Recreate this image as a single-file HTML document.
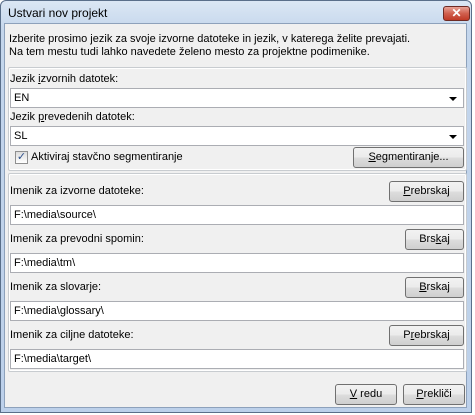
<!DOCTYPE html>
<html><head><style>
*{margin:0;padding:0;box-sizing:border-box}
body{width:475px;height:415px;background:#fff;font-family:"Liberation Sans",sans-serif;font-size:11px;color:#000;position:relative;overflow:hidden}
.win{position:absolute;left:0;top:0;width:472px;height:413px;background:linear-gradient(#dbe7f4,#c4d6ec 30px,#bcd0ea);border:1px solid #5a6f8a;border-radius:6px 6px 0 0}
.client{position:absolute;left:4px;top:23px;width:463px;height:385px;background:#f0f0f0;border:1px solid #8da1bb}
.a{position:absolute;white-space:nowrap}
.grp{position:absolute;border:1px solid #c8ccd0;border-radius:2px;box-shadow:inset 0 0 0 1px #fff}
.inp{position:absolute;background:#fff;border:1px solid #abadb3;height:20px;padding:3px 0 0 3px;font-size:11px}
.btn{position:absolute;border:1px solid #707070;border-radius:3px;background:linear-gradient(#f2f2f2 0,#ebebeb 50%,#dddddd 51%,#cfcfcf);text-align:center;line-height:18px;font-size:11px}
.arr{position:absolute;right:6px;top:8px;width:0;height:0;border-left:4px solid transparent;border-right:4px solid transparent;border-top:4px solid #000}
u{text-decoration:underline}
</style></head><body>
<div class="win">
 <div class="a" style="left:7px;top:5px;font-size:12px">Ustvari nov projekt</div>
 <div style="position:absolute;left:442px;top:5px;width:27px;height:15px;border:1px solid #6d2b24;border-radius:3px;background:linear-gradient(#e8a296,#d0604e 50%,#c03a26);color:#fff;text-align:center;font-weight:bold;font-size:12px;line-height:13px">✕</div>
</div>
<div class="client"></div>
<div class="a" style="left:9px;top:33px">Izberite prosimo jezik za svoje izvorne datoteke in jezik, v katerega želite prevajati.</div>
<div class="a" style="left:9px;top:46px">Na tem mestu tudi lahko navedete želeno mesto za projektne podimenike.</div>

<div class="grp" style="left:8px;top:67px;width:459px;height:104px"></div>
<div class="a" style="left:10px;top:73px">Jezik <u>i</u>zvornih datotek:</div>
<div class="inp" style="left:10px;top:88px;width:454px">EN<div class="arr"></div></div>
<div class="a" style="left:10px;top:111px">Jezik <u>p</u>revedenih datotek:</div>
<div class="inp" style="left:10px;top:126px;width:454px">SL<div class="arr"></div></div>
<div style="position:absolute;left:15px;top:151px;width:13px;height:13px;border:1px solid #8f8f8f;background:linear-gradient(#dcdcdc,#fff);color:#2d4f8a;font-size:11px;line-height:11px;text-align:center">✓</div>
<div class="a" style="left:31px;top:151px">Aktiviraj stavčno segmentiranje</div>
<div class="btn" style="left:353px;top:147px;width:111px;height:21px"><u>S</u>egmentiranje...</div>

<div class="grp" style="left:8px;top:173px;width:459px;height:199px"></div>
<div class="a" style="left:10px;top:185px">Imenik za izvorne datoteke:</div>
<div class="btn" style="left:389px;top:181px;width:75px;height:21px"><u>P</u>rebrskaj</div>
<div class="inp" style="left:10px;top:205px;width:454px">F:\media\source\</div>
<div class="a" style="left:10px;top:233px">Imenik za prevodni spomin:</div>
<div class="btn" style="left:405px;top:229px;width:59px;height:21px">Brs<u>k</u>aj</div>
<div class="inp" style="left:10px;top:253px;width:454px">F:\media\tm\</div>
<div class="a" style="left:10px;top:281px">Imenik za slovarje:</div>
<div class="btn" style="left:405px;top:277px;width:59px;height:21px"><u>B</u>rskaj</div>
<div class="inp" style="left:10px;top:301px;width:454px">F:\media\glossary\</div>
<div class="a" style="left:10px;top:329px">Imenik za ciljne datoteke:</div>
<div class="btn" style="left:389px;top:325px;width:75px;height:21px">P<u>r</u>ebrskaj</div>
<div class="inp" style="left:10px;top:349px;width:454px">F:\media\target\</div>

<div class="btn" style="left:335px;top:384px;width:62px;height:21px"><u>V</u> redu</div>
<div class="btn" style="left:403px;top:384px;width:62px;height:21px"><u>P</u>rekliči</div>
</body></html>
